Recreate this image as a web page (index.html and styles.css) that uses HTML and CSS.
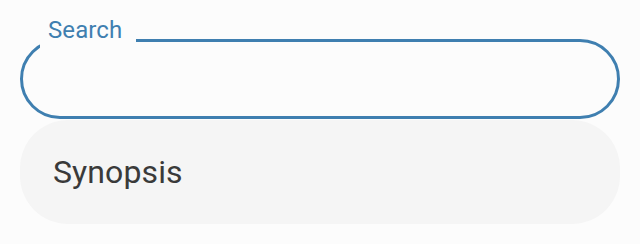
FILE: index.html
```html
<!DOCTYPE html>
<html lang="en">
<head>
    <meta charset="UTF-8">
    <meta name="viewport" content="width=device-width, initial-scale=1.0">
    <title>Search</title>
    <link rel="stylesheet" href="styles.css">
</head>
<body>
    <div class="container">
        <div class="searchField">
            <label class="searchLabel" for="search">Search</label>
            <input id="search" class="searchInput" type="text">
        </div>
        <div class="resultItem">Synopsis</div>
    </div>
</body>
</html>
```

FILE: styles.css
```css
* {
    box-sizing: border-box;
}

body {
    margin: 0;
    background-color: #fcfcfc;
    font-family: Roboto, "Liberation Sans", sans-serif;
}

.container {
    padding: 39px 20px 0 20px;
}

.searchField {
    position: relative;
    height: 80px;
    border: 3px solid #3f7fb0;
    border-radius: 40px;
}

.searchLabel {
    position: absolute;
    left: 17px;
    top: -24px;
    padding: 0 14px 6px 8px;
    font-size: 24px;
    line-height: 24px;
    letter-spacing: 0.1px;
    color: #3f7fb0;
    background-color: #fcfcfc;
}

.searchInput {
    width: 100%;
    height: 100%;
    border: none;
    outline: none;
    background: transparent;
    padding: 0 30px;
    font-family: inherit;
    font-size: 32px;
}

.resultItem {
    display: flex;
    align-items: center;
    margin-top: 1px;
    height: 104px;
    padding-left: 33px;
    border-radius: 48px;
    background-color: #f5f5f5;
    font-size: 32px;
    letter-spacing: 0.1px;
    color: #3a3a3a;
}
```
